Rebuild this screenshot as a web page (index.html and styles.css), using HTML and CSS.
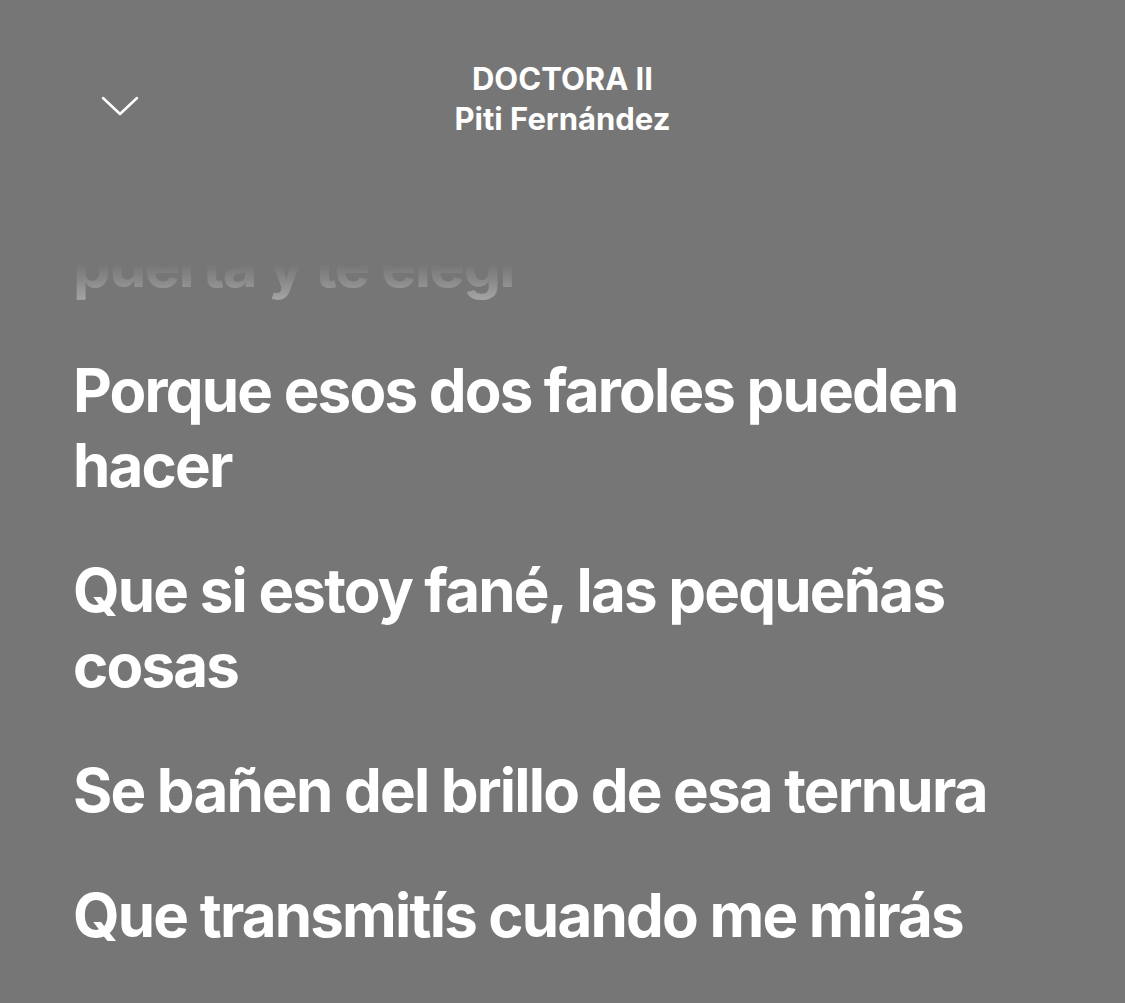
FILE: index.html
```html
<!DOCTYPE html>
<html lang="es">
<head>
<meta charset="utf-8">
<title>DOCTORA II – Piti Fernández</title>
<link rel="stylesheet" href="styles.css">
</head>
<body>
<div class="screen">
  <header class="topbar">
    <button class="collapse" aria-label="Cerrar">
      <svg width="38" height="22" viewBox="0 0 38 22" fill="none" stroke="#fff" stroke-width="2.5" stroke-linecap="round" stroke-linejoin="round"><path d="M2 3 L19 19 L36 3"/></svg>
    </button>
    <div class="track">
      <div class="track-title">DOCTORA II</div>
      <div class="track-artist">Piti Fernández</div>
    </div>
    <div class="spacer"></div>
  </header>
  <main class="lyrics-viewport">
    <div class="lyrics">
      <p class="line">puerta y te elegí</p>
      <p class="line">Porque esos dos faroles pueden hacer</p>
      <p class="line">Que si estoy fané, las pequeñas cosas</p>
      <p class="line">Se bañen del brillo de esa ternura</p>
      <p class="line">Que transmitís cuando me mirás</p>
    </div>
  </main>
</div>
</body>
</html>
```
FILE: styles.css
```css
html, body {
  margin: 0;
  padding: 0;
  background: #767676;
}
body {
  font-family: Inter, "Noto Sans", "Liberation Sans", sans-serif;
  color: #ffffff;
  overflow: hidden;
}
.screen {
  width: 1125px;
  height: 1003px;
  display: flex;
  flex-direction: column;
}
.topbar {
  display: flex;
  align-items: flex-start;
  padding: 59px 0 0 0;
  height: 264px;
  flex: none;
  box-sizing: border-box;
}
.collapse {
  width: 240px;
  padding: 36px 0 0 101px;
  margin: 0;
  border: 0;
  background: none;
  display: flex;
  align-items: flex-start;
  box-sizing: border-box;
}
.spacer {
  width: 240px;
}
.track {
  flex: 1;
  text-align: center;
  font-weight: 700;
  letter-spacing: 0;
}
.track-title {
  font-size: 31px;
  line-height: 39px;
}
.track-artist {
  font-size: 31px;
  line-height: 41px;
}
.lyrics-viewport {
  flex: 1;
  overflow: hidden;
  -webkit-mask-image: linear-gradient(to bottom, rgba(0,0,0,0) 0px, rgba(0,0,0,0.12) 14px, rgba(0,0,0,0.36) 38px, #000 100px);
  mask-image: linear-gradient(to bottom, rgba(0,0,0,0) 0px, rgba(0,0,0,0.12) 14px, rgba(0,0,0,0.36) 38px, #000 100px);
}
.lyrics {
  margin-top: -36px;
  padding: 0 73px;
  display: flex;
  flex-direction: column;
  gap: 50px;
}
.line {
  margin: 0;
  font-size: 60px;
  line-height: 75px;
  font-weight: 700;
  letter-spacing: -1.8px;
}
```
